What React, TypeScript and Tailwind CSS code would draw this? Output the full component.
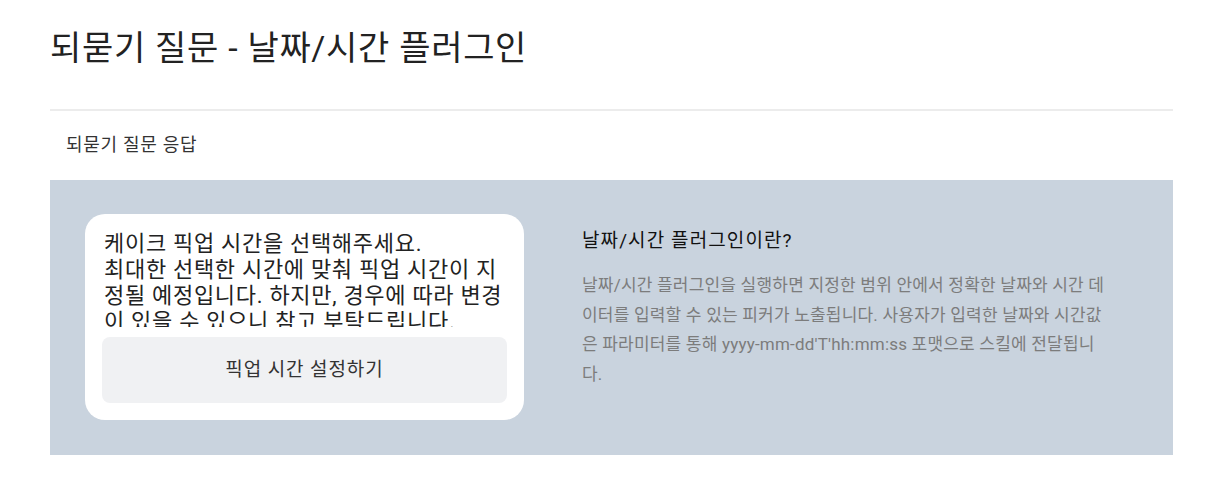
import React from "react";

const font = { fontFamily: 'Roboto, "Noto Sans CJK KR", sans-serif' };

export default function App() {
  return (
    <div className="w-[1210px] h-[478px] bg-white" style={font}>
      <div className="ml-[50px] w-[1123px]">
        <h1 className="pt-[28px] text-[34px] leading-[40px] tracking-[0.7px] text-[#222] font-normal">
          되묻기 질문 - 날짜/시간 플러그인
        </h1>
        <div className="mt-[41px] h-[2px] bg-[#ececec]" />
        <div className="pl-[16px] pt-[22px] pb-[23px] text-[18px] leading-[24px] tracking-[0.7px] text-[#333]">
          되묻기 질문 응답
        </div>
        <div className="flex bg-[#c9d3de] pl-[35px] pt-[34px] pb-[35px] h-[275px]">
          <div className="w-[439px] shrink-0 rounded-[20px] bg-white px-[17px] pt-[17px] pb-[17px] flex flex-col">
            <div className="h-[96px] overflow-hidden pl-[2px] text-[22px] leading-[26px] tracking-[0.7px] text-[#222] break-all">
              케이크 픽업 시간을 선택해주세요.
              <br />
              최대한 선택한 시간에 맞춰 픽업 시간이 지정될 예정입니다. 하지만, 경우에 따라 변경이 있을 수 있으니 참고 부탁드립니다.
            </div>
            <button className="mt-[10px] h-[66px] w-full rounded-[8px] bg-[#f0f1f3] text-[19px] tracking-[0.9px] text-[#333]">
              픽업 시간 설정하기
            </button>
          </div>
          <div className="ml-[58px] w-[529px] pt-[14px]">
            <div className="text-[19px] leading-[26px] tracking-[1.1px] text-[#111] font-normal">
              날짜/시간 플러그인이란?
            </div>
            <p className="mt-[17px] text-[17px] leading-[29.5px] tracking-[0.2px] text-[#7c7c7c] break-all">
              날짜/시간 플러그인을 실행하면 지정한 범위 안에서 정확한 날짜와 시간 데이터를 입력할 수 있는 피커가 노출됩니다. 사용자가 입력한 날짜와 시간값은 파라미터를 통해 yyyy-mm-dd'T'hh:mm:ss 포맷으로 스킬에 전달됩니다.
            </p>
          </div>
        </div>
      </div>
    </div>
  );
}
